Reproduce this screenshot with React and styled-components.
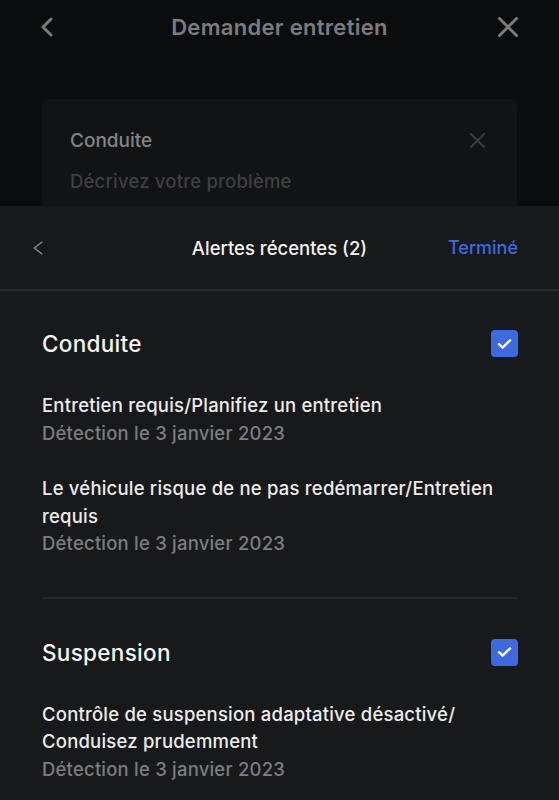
import styled, { createGlobalStyle } from "styled-components";

const GlobalStyle = createGlobalStyle`
  html, body {
    margin: 0;
    padding: 0;
    background: #0b0c0d;
    font-family: Inter, "Noto Sans", sans-serif;
  }
`;

const Screen = styled.div`
  width: 559px;
  height: 800px;
  display: flex;
  flex-direction: column;
  overflow: hidden;
  background: #0b0c0d;
`;

const Backdrop = styled.div`
  height: 206px;
  flex-shrink: 0;
  overflow: hidden;
`;

const TopBar = styled.div`
  height: 54px;
  display: grid;
  grid-template-columns: 86px 1fr 86px;
  align-items: center;
`;

const IconButton = styled.div`
  display: flex;
  align-items: center;
  justify-content: ${(p) => p.$align || "center"};
  padding: ${(p) => p.$pad || "0"};
`;

const TopTitle = styled.div`
  text-align: center;
  font-size: 22px;
  font-weight: 600;
  letter-spacing: 0.3px;
  color: #7b7c7d;
`;

const GhostCard = styled.div`
  margin: 45px 42px 0;
  height: 200px;
  border-radius: 6px;
  background: #121314;
  padding: 30px 32px 0 28px;
  box-sizing: border-box;
`;

const GhostRow = styled.div`
  display: flex;
  align-items: center;
  justify-content: space-between;
`;

const GhostLabel = styled.div`
  font-size: 19px;
  font-weight: 500;
  color: #838485;
`;

const GhostPlaceholder = styled.div`
  margin-top: 18px;
  font-size: 18.5px;
  font-weight: 500;
  letter-spacing: 0.2px;
  color: #3f4041;
`;

const Sheet = styled.div`
  flex: 1;
  background: #18191b;
`;

const SheetHeader = styled.div`
  height: 83px;
  display: grid;
  grid-template-columns: 120px 1fr 120px;
  align-items: center;
  border-bottom: 2px solid #2b2c2e;
`;

const SheetTitle = styled.div`
  text-align: center;
  font-size: 18.5px;
  font-weight: 500;
  color: #f2f2f2;
`;

const DoneButton = styled.div`
  text-align: right;
  padding-right: 41px;
  font-size: 18px;
  font-weight: 500;
  color: #3e6ae1;
`;

const Content = styled.div`
  padding: 39px 41px 0 42px;
`;

const Section = styled.div`
  display: flex;
  flex-direction: column;
  gap: 28px;
`;

const SectionHead = styled.div`
  display: flex;
  align-items: center;
  justify-content: space-between;
  margin-bottom: 7px;
`;

const SectionTitle = styled.div`
  font-size: 22.5px;
  font-weight: 500;
  letter-spacing: 0.3px;
  color: #f5f5f5;
`;

const Checkbox = styled.div`
  width: 27px;
  height: 27px;
  border-radius: 4px;
  background: #3e6ae1;
  display: flex;
  align-items: center;
  justify-content: center;
`;

const Alert = styled.div`
  font-size: 18.5px;
  font-weight: 500;
  letter-spacing: 0.2px;
  line-height: 27.5px;
`;

const AlertTitle = styled.div`
  color: #ececec;
`;

const AlertDate = styled.div`
  color: #7c7d7e;
`;

const Divider = styled.div`
  height: 2px;
  background: #262729;
  margin: 39px 0 40px;
`;

const Chevron = ({ w, h, color, stroke }) => (
  <svg width={w} height={h} viewBox={`0 0 ${w} ${h}`} fill="none">
    <path
      d={`M${w - stroke / 2 - 0.5} ${stroke / 2 + 0.5} L${stroke / 2 + 0.5} ${h / 2} L${w - stroke / 2 - 0.5} ${h - stroke / 2 - 0.5}`}
      stroke={color}
      strokeWidth={stroke}
      strokeLinecap="round"
      strokeLinejoin="round"
    />
  </svg>
);

const Cross = ({ size = 20, color, stroke = 2.6 }) => (
  <svg width={size} height={size} viewBox={`0 0 ${size} ${size}`} fill="none">
    <path
      d={`M${stroke / 2} ${stroke / 2} L${size - stroke / 2} ${size - stroke / 2} M${size - stroke / 2} ${stroke / 2} L${stroke / 2} ${size - stroke / 2}`}
      stroke={color}
      strokeWidth={stroke}
      strokeLinecap="round"
    />
  </svg>
);

const Check = () => (
  <svg width="15" height="12" viewBox="0 0 15 12" fill="none">
    <path
      d="M2 6.2 L5.6 9.6 L13 2.4"
      stroke="#fff"
      strokeWidth="2.4"
      strokeLinecap="round"
      strokeLinejoin="round"
    />
  </svg>
);

const sections = [
  {
    name: "Conduite",
    alerts: [
      ["Entretien requis/Planifiez un entretien"],
      ["Le véhicule risque de ne pas redémarrer/Entretien", "requis"],
    ],
  },
  {
    name: "Suspension",
    alerts: [
      ["Contrôle de suspension adaptative désactivé/", "Conduisez prudemment"],
    ],
  },
];

export default function App() {
  return (
    <Screen>
      <GlobalStyle />
      <Backdrop>
        <TopBar>
          <IconButton $align="flex-start" $pad="0 0 0 41px">
            <Chevron w={12} h={20} color="#7a7a7a" stroke={3} />
          </IconButton>
          <TopTitle>Demander entretien</TopTitle>
          <IconButton $align="flex-end" $pad="0 41px 0 0">
            <Cross size={20} color="#7a7a7a" stroke={3} />
          </IconButton>
        </TopBar>
        <GhostCard>
          <GhostRow>
            <GhostLabel>Conduite</GhostLabel>
            <Cross size={15} color="#3c3d3e" stroke={2} />
          </GhostRow>
          <GhostPlaceholder>Décrivez votre problème</GhostPlaceholder>
        </GhostCard>
      </Backdrop>
      <Sheet>
        <SheetHeader>
          <IconButton $align="flex-start" $pad="0 0 0 33px">
            <Chevron w={10} h={14} color="#8a8b8c" stroke={1.5} />
          </IconButton>
          <SheetTitle>Alertes récentes (2)</SheetTitle>
          <DoneButton>Terminé</DoneButton>
        </SheetHeader>
        <Content>
          {sections.map((s, i) => (
            <div key={s.name}>
              {i > 0 && <Divider />}
              <Section>
                <SectionHead>
                  <SectionTitle>{s.name}</SectionTitle>
                  <Checkbox>
                    <Check />
                  </Checkbox>
                </SectionHead>
                {s.alerts.map((lines, j) => (
                  <Alert key={j}>
                    {lines.map((l) => (
                      <AlertTitle key={l}>{l}</AlertTitle>
                    ))}
                    <AlertDate>Détection le 3 janvier 2023</AlertDate>
                  </Alert>
                ))}
              </Section>
            </div>
          ))}
        </Content>
      </Sheet>
    </Screen>
  );
}
